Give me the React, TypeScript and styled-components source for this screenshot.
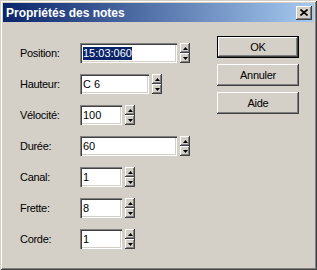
import React from "react";
import styled, { createGlobalStyle } from "styled-components";

const Global = createGlobalStyle`
  html, body { margin: 0; padding: 0; background: #d4d0c8; }
  body { font-family: "Liberation Sans", Arial, sans-serif; font-size: 11px; }
`;

const Window = styled.div`
  box-sizing: border-box;
  width: 317px;
  height: 270px;
  padding: 3px;
  background: #d4d0c8;
  box-shadow: inset 1px 1px #d4d0c8, inset -1px -1px #404040,
    inset 2px 2px #ffffff, inset -2px -2px #808080;
  display: flex;
  flex-direction: column;
`;

const TitleBar = styled.div`
  height: 19px;
  flex: none;
  display: flex;
  align-items: center;
  padding: 0 2px 0 3px;
  background: linear-gradient(to right, #0a246a, #a6caf0);
`;

const Title = styled.div`
  flex: 1;
  color: #ffffff;
  font-weight: bold;
  font-size: 12px;
  white-space: nowrap;
`;

const CloseButton = styled.div`
  box-sizing: border-box;
  width: 16px;
  height: 14px;
  background: #d4d0c8;
  box-shadow: inset -1px -1px #404040, inset 1px 1px #ffffff,
    inset -2px -2px #808080;
  display: flex;
  align-items: center;
  justify-content: center;
`;

const Body = styled.div`
  flex: 1;
  display: flex;
  align-items: flex-start;
`;

const Fields = styled.div`
  display: grid;
  grid-template-columns: 60px auto;
  row-gap: 11px;
  padding: 21px 0 0 17px;
  align-items: center;
`;

const Label = styled.div`
  color: #000;
  font-size: 11px;
  letter-spacing: -0.3px;
  white-space: nowrap;
`;

const Control = styled.div`
  display: flex;
  align-items: stretch;
  gap: 3px;
  height: 20px;
`;

const Input = styled.div<{ $w: number }>`
  box-sizing: border-box;
  width: ${(p) => p.$w}px;
  height: 20px;
  background: #ffffff;
  box-shadow: inset 1px 1px #808080, inset 2px 2px #404040,
    inset -1px -1px #ffffff, inset -2px -2px #d4d0c8;
  padding: 0 3px;
  display: flex;
  align-items: center;
  font-size: 11px;
  color: #000;
  white-space: nowrap;
  overflow: hidden;
`;

const Selected = styled.span`
  background: #0a246a;
  color: #ffffff;
  line-height: 13px;
`;

const Spinner = styled.div`
  display: flex;
  flex-direction: column;
  width: 10px;
`;

const SpinButton = styled.div`
  flex: 1;
  box-sizing: border-box;
  background: #d4d0c8;
  box-shadow: inset -1px -1px #404040, inset 1px 1px #ffffff,
    inset -2px -2px #808080;
  display: flex;
  align-items: center;
  justify-content: center;
`;

const Buttons = styled.div`
  margin-left: auto;
  margin-right: 15px;
  margin-top: 14px;
  display: flex;
  flex-direction: column;
  gap: 6px;
`;

const Button = styled.div<{ $default?: boolean }>`
  box-sizing: border-box;
  width: 82px;
  height: 22px;
  background: #d4d0c8;
  display: flex;
  align-items: center;
  justify-content: center;
  font-size: 11px;
  letter-spacing: -0.3px;
  color: #000;
  box-shadow: ${(p) =>
    p.$default
      ? "inset 0 0 0 1px #000, inset -2px -2px #404040, inset 2px 2px #ffffff, inset -3px -3px #808080"
      : "inset -1px -1px #404040, inset 1px 1px #ffffff, inset -2px -2px #808080"};
`;

const Arrow = ({ up }: { up: boolean }) => (
  <svg width="5" height="3" viewBox="0 0 5 3">
    <path d={up ? "M2.5 0 L5 3 L0 3 Z" : "M0 0 L5 0 L2.5 3 Z"} fill="#000" />
  </svg>
);

const SpinBox = () => (
  <Spinner>
    <SpinButton>
      <Arrow up />
    </SpinButton>
    <SpinButton>
      <Arrow up={false} />
    </SpinButton>
  </Spinner>
);

const rows: { label: string; value: string; w: number; selected?: boolean }[] = [
  { label: "Position:", value: "15:03:060", w: 97, selected: true },
  { label: "Hauteur:", value: "C 6", w: 69 },
  { label: "Vélocité:", value: "100", w: 42 },
  { label: "Durée:", value: "60", w: 97 },
  { label: "Canal:", value: "1", w: 42 },
  { label: "Frette:", value: "8", w: 42 },
  { label: "Corde:", value: "1", w: 42 },
];

export default function App() {
  return (
    <>
      <Global />
      <Window>
        <TitleBar>
          <Title>Propriétés des notes</Title>
          <CloseButton>
            <svg width="8" height="7" viewBox="0 0 8 7">
              <path d="M0.5 0.5 L7.5 6.5 M7.5 0.5 L0.5 6.5" stroke="#000" strokeWidth="1.6" />
            </svg>
          </CloseButton>
        </TitleBar>
        <Body>
          <Fields>
            {rows.map((r) => (
              <React.Fragment key={r.label}>
                <Label>{r.label}</Label>
                <Control>
                  <Input $w={r.w}>
                    {r.selected ? <Selected>{r.value}</Selected> : r.value}
                  </Input>
                  <SpinBox />
                </Control>
              </React.Fragment>
            ))}
          </Fields>
          <Buttons>
            <Button $default>OK</Button>
            <Button>Annuler</Button>
            <Button>Aide</Button>
          </Buttons>
        </Body>
      </Window>
    </>
  );
}
